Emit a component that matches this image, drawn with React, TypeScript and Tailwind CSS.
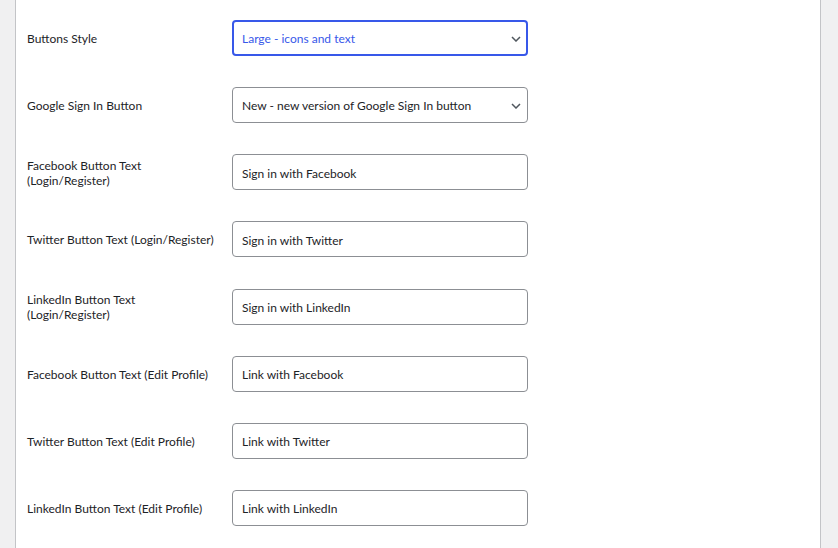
import React from "react";

type Row = { label: string[]; value: string; kind: "select" | "input"; focused?: boolean };

const rows: Row[] = [
  { label: ["Buttons Style"], value: "Large - icons and text", kind: "select", focused: true },
  { label: ["Google Sign In Button"], value: "New - new version of Google Sign In button", kind: "select" },
  { label: ["Facebook Button Text", "(Login/Register)"], value: "Sign in with Facebook", kind: "input" },
  { label: ["Twitter Button Text (Login/Register)"], value: "Sign in with Twitter", kind: "input" },
  { label: ["LinkedIn Button Text", "(Login/Register)"], value: "Sign in with LinkedIn", kind: "input" },
  { label: ["Facebook Button Text (Edit Profile)"], value: "Link with Facebook", kind: "input" },
  { label: ["Twitter Button Text (Edit Profile)"], value: "Link with Twitter", kind: "input" },
  { label: ["LinkedIn Button Text (Edit Profile)"], value: "Link with LinkedIn", kind: "input" },
];

function Chevron() {
  return (
    <svg width="10" height="6" viewBox="0 0 10 6" className="shrink-0">
      <path d="M1 1 L5 5 L9 1" fill="none" stroke="#50575e" strokeWidth="1.5" />
    </svg>
  );
}

export default function App() {
  return (
    <div
      className="min-h-[548px] bg-[#f0f0f1] pl-[15px] pr-[17px]"
      style={{ fontFamily: 'Lato, "Noto Sans", sans-serif' }}
    >
      <div className="min-h-[548px] bg-white border-x border-[#c3c4c7] pl-[11px] pt-[20px]">
        <div className="flex flex-col gap-[31.14px]">
          {rows.map((r, i) => (
            <div key={i} className="flex items-center h-9">
              <div className="w-[205px] shrink-0 whitespace-nowrap pt-px text-[12px] leading-[15px] text-[#1d2327]">
                {r.label.map((l, j) => (
                  <div key={j}>{l}</div>
                ))}
              </div>
              {r.kind === "select" ? (
                <div
                  className={
                    r.focused
                      ? "w-[296px] h-9 flex items-center justify-between rounded-[4px] border-2 border-[#3858e9] pl-[8px] pr-[5px] pt-[2px] text-[12px] whitespace-nowrap text-[#3858e9]"
                      : "w-[296px] h-9 flex items-center justify-between rounded-[4px] border border-[#8c8f94] pl-[9px] pr-[6px] pt-[2px] text-[12px] whitespace-nowrap text-[#1d2327]"
                  }
                >
                  <span>{r.value}</span>
                  <Chevron />
                </div>
              ) : (
                <div className="w-[296px] h-9 flex items-center rounded-[4px] border border-[#8c8f94] pl-[9px] pt-[3px] text-[12px] whitespace-nowrap text-[#1d2327]">
                  {r.value}
                </div>
              )}
            </div>
          ))}
        </div>
      </div>
    </div>
  );
}
